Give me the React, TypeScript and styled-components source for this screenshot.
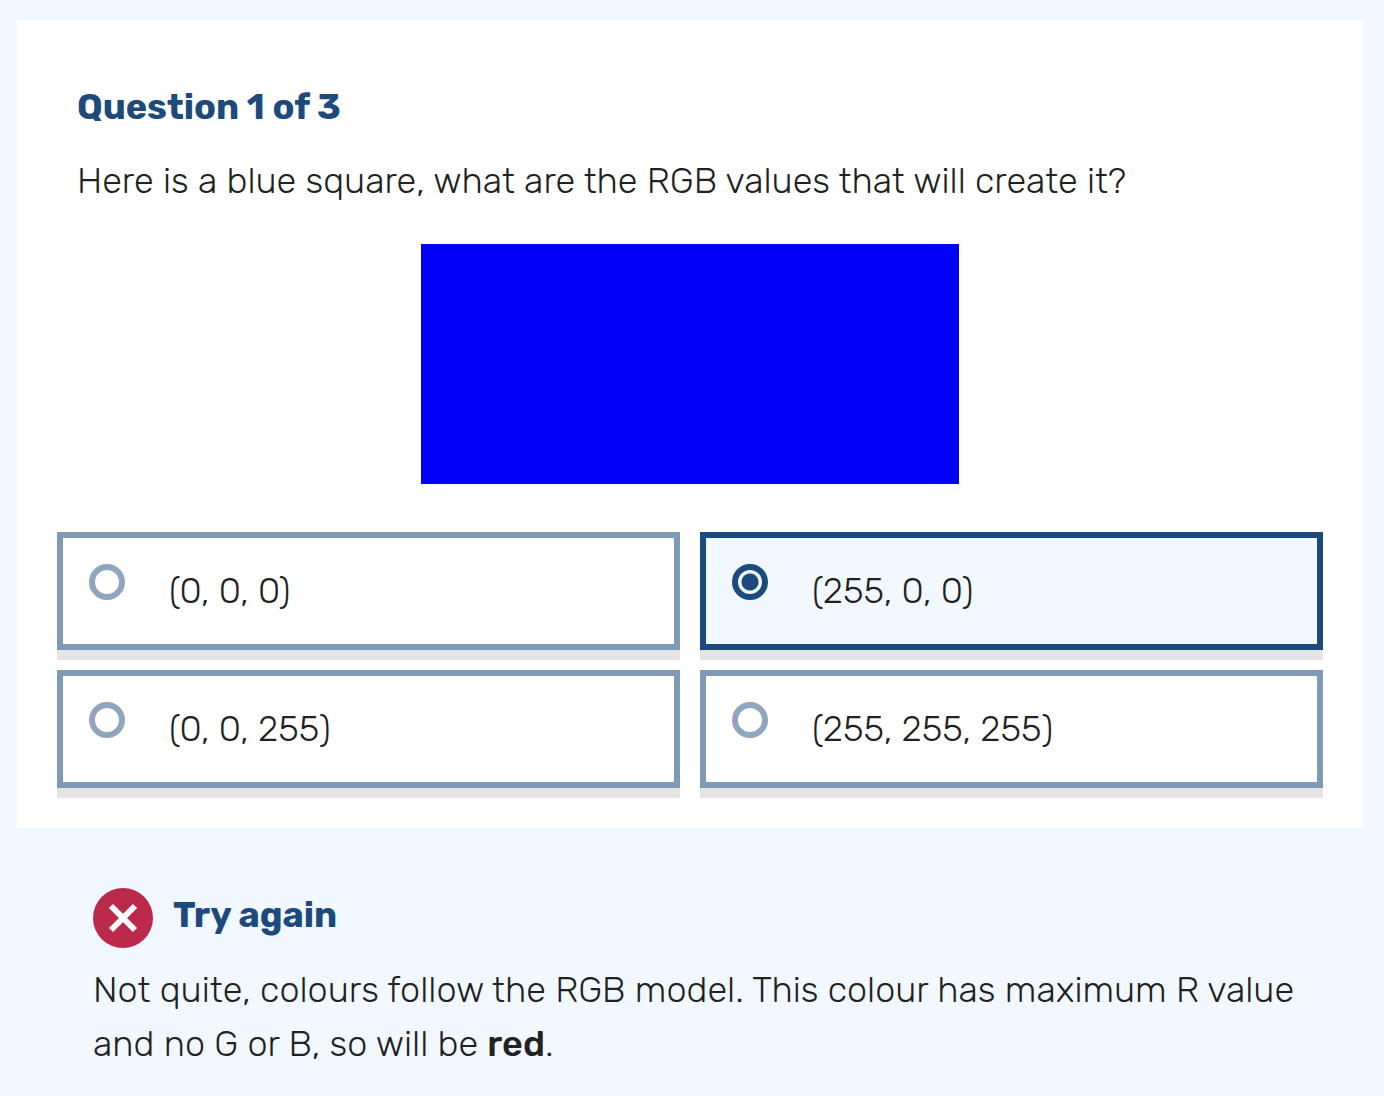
import React, { useState } from "react";
import styled, { createGlobalStyle } from "styled-components";

const navy = "#1d4a7c";
const pale = "#f1f8ff";

const GlobalStyle = createGlobalStyle`
  *, *::before, *::after {
    box-sizing: border-box;
  }
  body {
    margin: 0;
    background: ${pale};
    color: #212121;
    font-family: Rubik, Inter, "Liberation Sans", sans-serif;
    font-size: 36px;
    font-weight: 300;
    line-height: 54px;
  }
`;

const Page = styled.main`
  padding: 20px 21px 20px 17px;
`;

const Card = styled.form`
  padding: 60px 40px 40px;
  background: #ffffff;
`;

const Intro = styled.div`
  padding: 0 20px;
`;

const Heading = styled.h2`
  margin: 0;
  color: ${navy};
  font-size: 36px;
  font-weight: 700;
  line-height: 54px;
`;

const Text = styled.p`
  margin: 20px 0 0;
`;

const Swatch = styled.div`
  width: 42.5%;
  height: 240px;
  margin: 36px auto 48px;
  background: #0000fa;
`;

const Options = styled.fieldset`
  display: grid;
  grid-template-columns: repeat(2, minmax(0, 1fr));
  gap: 20px;
  margin: 0;
  padding: 0;
  border: 0;
`;

const Option = styled.label<{ $selected: boolean }>`
  display: flex;
  align-items: flex-start;
  gap: 44px;
  padding: 26px;
  border: 6px solid ${(p) => (p.$selected ? navy : "#7e9ab6")};
  background: ${(p) => (p.$selected ? pale : "#ffffff")};
  box-shadow: 0 10px 0 #e4e4e4;
  cursor: pointer;
`;

const Radio = styled.input`
  appearance: none;
  flex: none;
  width: 36px;
  height: 36px;
  margin: 0;
  border: 6px solid #8fa5c0;
  border-radius: 50%;
  background: #ffffff;

  &:checked {
    border-color: ${navy};
    background: radial-gradient(circle, ${navy} 8px, ${pale} 9px);
  }
`;

const Feedback = styled.section`
  padding: 60px 56px 0 76px;
`;

const FeedbackHeader = styled.div`
  display: flex;
  align-items: flex-start;
  gap: 20px;
`;

const FeedbackText = styled.p`
  margin: 15px 0 0;
`;

const Strong = styled.strong`
  font-weight: 500;
`;

const CrossIcon = () => (
  <svg width="60" height="60" viewBox="0 0 60 60" aria-hidden="true">
    <circle cx="30" cy="30" r="30" fill="#bb2a4b" />
    <path d="M18 18L42 42M42 18L18 42" stroke="#ffffff" strokeWidth="6" />
  </svg>
);

const answers = ["(0, 0, 0)", "(255, 0, 0)", "(0, 0, 255)", "(255, 255, 255)"];

export default function App() {
  const [selected, setSelected] = useState(1);

  return (
    <Page>
      <GlobalStyle />
      <Card>
        <Intro>
          <Heading>Question 1 of 3</Heading>
          <Text id="question">
            Here is a blue square, what are the RGB values that will create it?
          </Text>
        </Intro>
        <Swatch />
        <Options aria-labelledby="question">
          {answers.map((answer, i) => (
            <Option key={answer} $selected={i === selected}>
              <Radio
                type="radio"
                name="answer"
                value={answer}
                checked={i === selected}
                onChange={() => setSelected(i)}
              />
              <span>{answer}</span>
            </Option>
          ))}
        </Options>
      </Card>
      <Feedback>
        <FeedbackHeader>
          <CrossIcon />
          <Heading>Try again</Heading>
        </FeedbackHeader>
        <FeedbackText>
          Not quite, colours follow the RGB model. This colour has maximum R
          value and no G or B, so will be <Strong>red</Strong>.
        </FeedbackText>
      </Feedback>
    </Page>
  );
}
